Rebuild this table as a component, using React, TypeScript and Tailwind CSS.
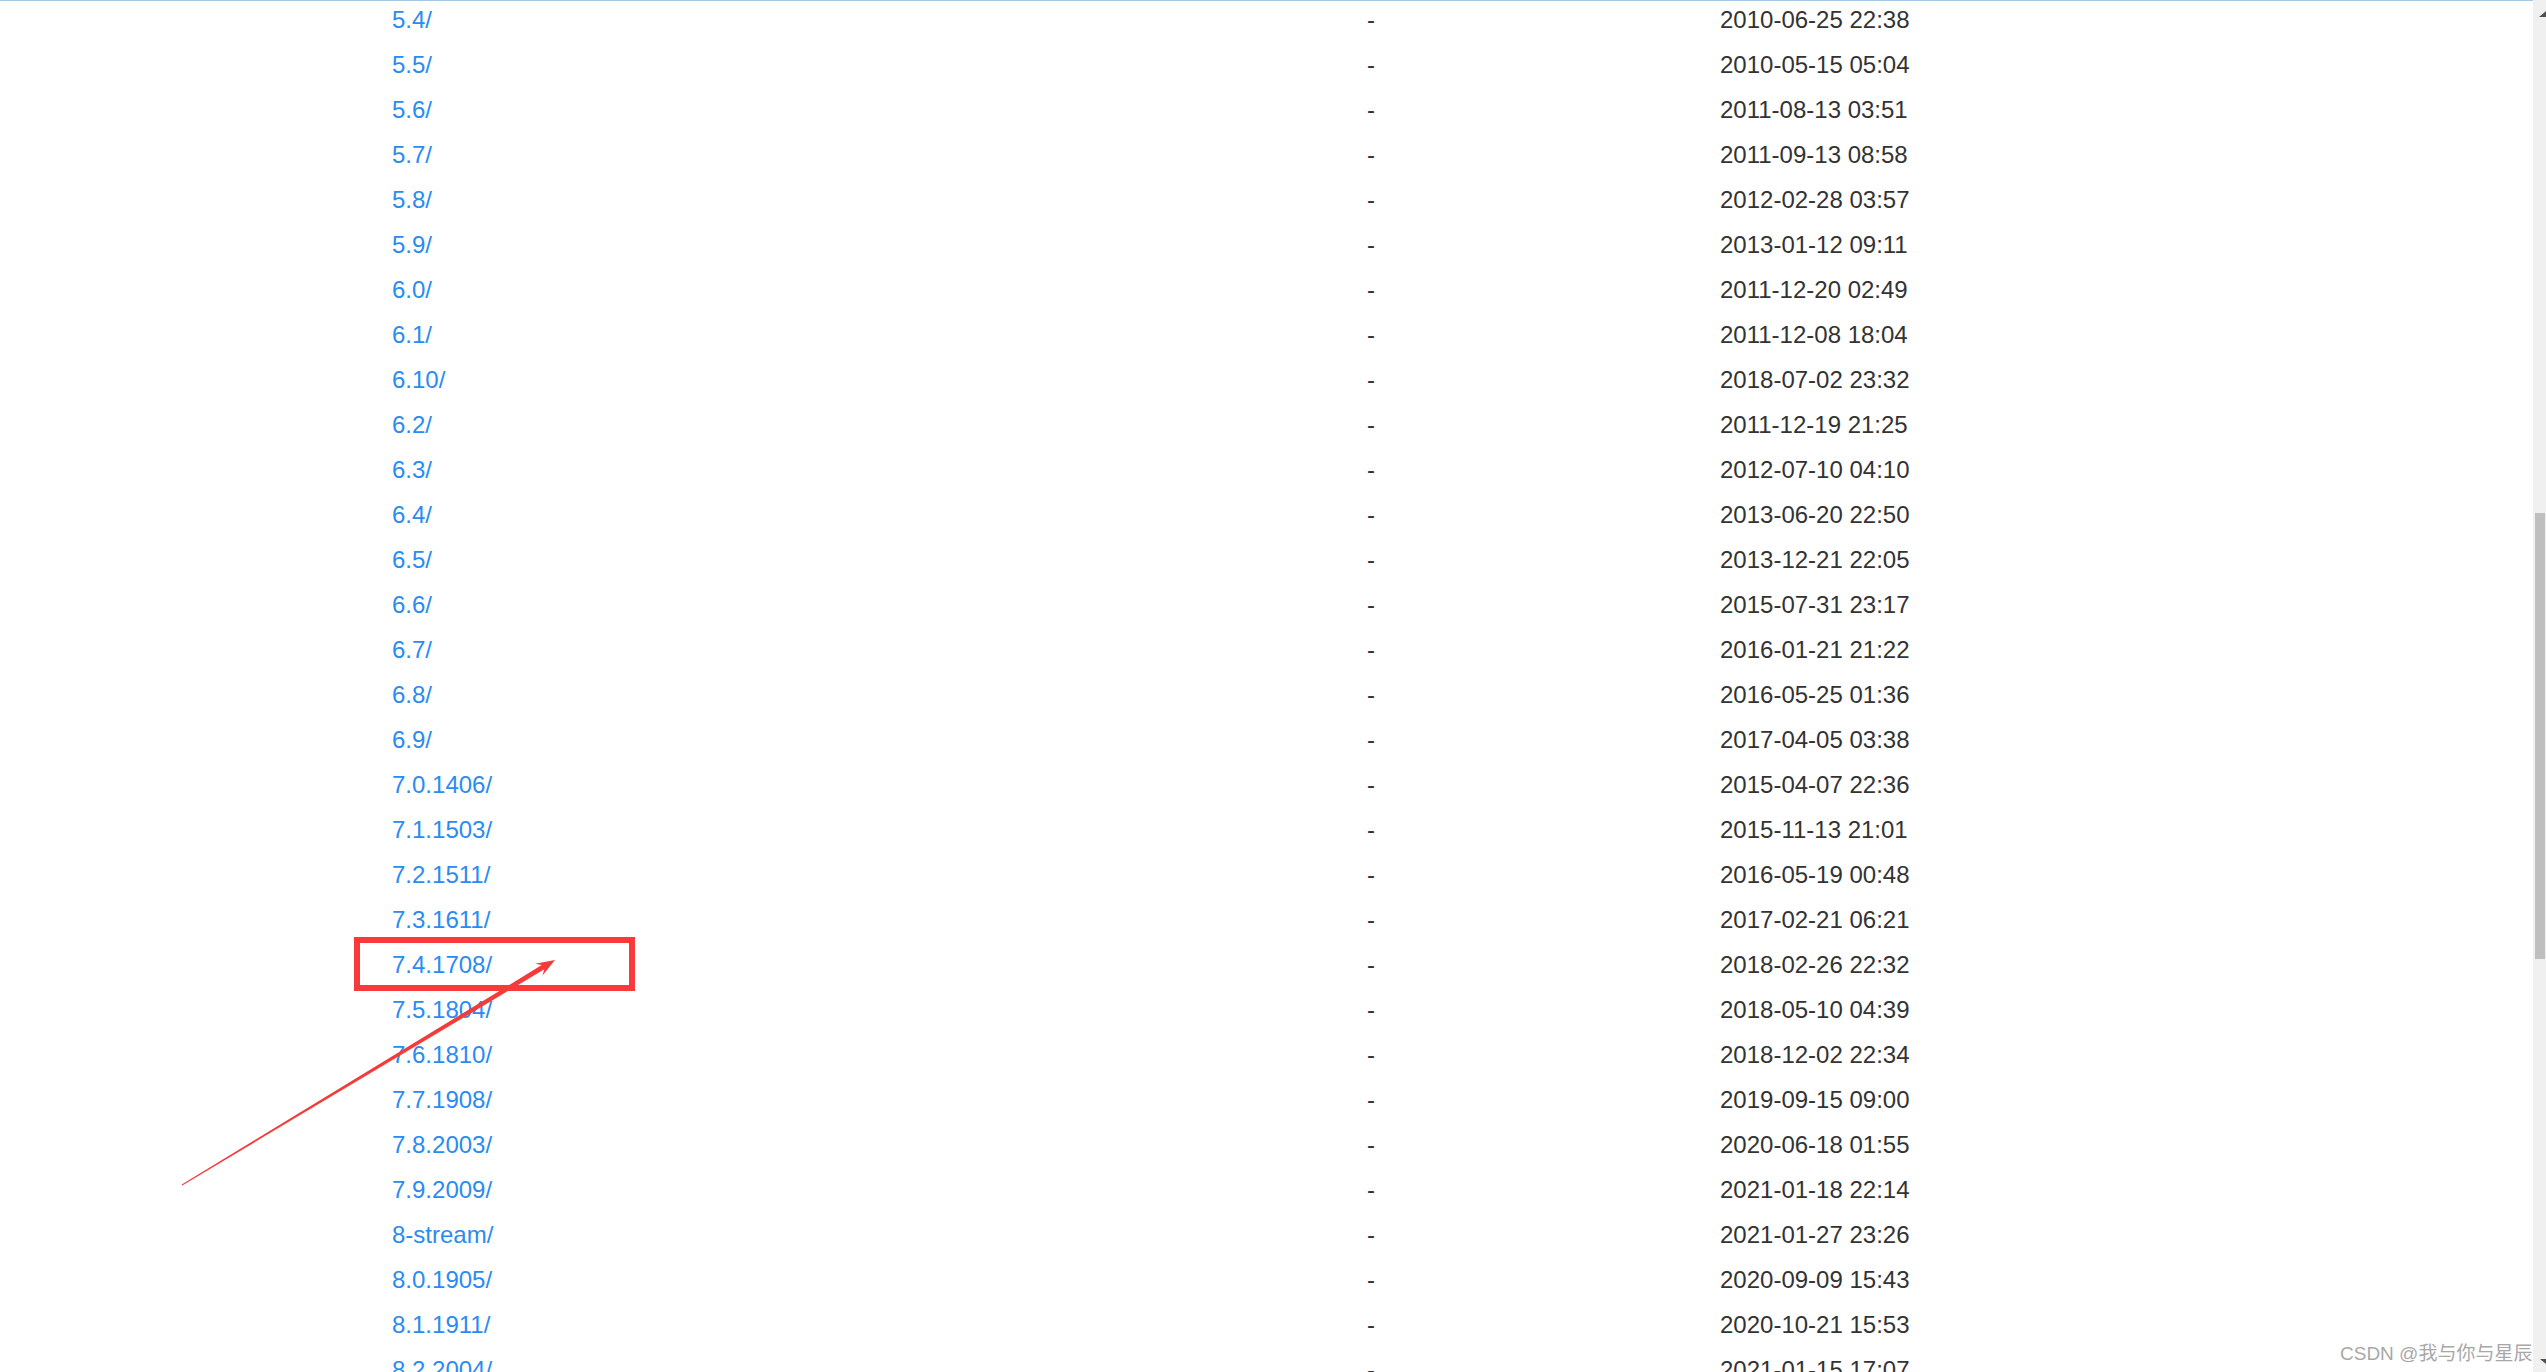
import React from "react";

const rows: [string, string][] = [
  ["5.4/", "2010-06-25 22:38"],
  ["5.5/", "2010-05-15 05:04"],
  ["5.6/", "2011-08-13 03:51"],
  ["5.7/", "2011-09-13 08:58"],
  ["5.8/", "2012-02-28 03:57"],
  ["5.9/", "2013-01-12 09:11"],
  ["6.0/", "2011-12-20 02:49"],
  ["6.1/", "2011-12-08 18:04"],
  ["6.10/", "2018-07-02 23:32"],
  ["6.2/", "2011-12-19 21:25"],
  ["6.3/", "2012-07-10 04:10"],
  ["6.4/", "2013-06-20 22:50"],
  ["6.5/", "2013-12-21 22:05"],
  ["6.6/", "2015-07-31 23:17"],
  ["6.7/", "2016-01-21 21:22"],
  ["6.8/", "2016-05-25 01:36"],
  ["6.9/", "2017-04-05 03:38"],
  ["7.0.1406/", "2015-04-07 22:36"],
  ["7.1.1503/", "2015-11-13 21:01"],
  ["7.2.1511/", "2016-05-19 00:48"],
  ["7.3.1611/", "2017-02-21 06:21"],
  ["7.4.1708/", "2018-02-26 22:32"],
  ["7.5.1804/", "2018-05-10 04:39"],
  ["7.6.1810/", "2018-12-02 22:34"],
  ["7.7.1908/", "2019-09-15 09:00"],
  ["7.8.2003/", "2020-06-18 01:55"],
  ["7.9.2009/", "2021-01-18 22:14"],
  ["8-stream/", "2021-01-27 23:26"],
  ["8.0.1905/", "2020-09-09 15:43"],
  ["8.1.1911/", "2020-10-21 15:53"],
  ["8.2.2004/", "2021-01-15 17:07"],
];

export default function App() {
  return (
    <div
      className="relative flex h-screen w-full overflow-hidden bg-white"
      style={{ fontFamily: '"Liberation Sans", Arial, "Noto Sans CJK SC", sans-serif' }}
    >
      <div className="flex min-w-0 flex-1 flex-col">
        <div className="h-px w-full shrink-0 bg-[#a6c8e6]" />
        <div className="mt-[-4px] flex flex-col pl-[392px] text-[24px]">
          {rows.map(([name, date]) => (
            <div
              key={name}
              className="grid h-[45px] grid-cols-[975px_353px_auto] leading-[45px]"
            >
              <a className="whitespace-nowrap text-[#2a8bf2]">{name}</a>
              <span className="text-[#333333]">-</span>
              <span className="whitespace-nowrap text-[#333333]">{date}</span>
            </div>
          ))}
        </div>
      </div>

      <div className="relative flex w-[13px] shrink-0 flex-col bg-[#f0f0f0]">
        <div className="ml-[2px] mt-[513px] h-[446px] w-[10px] bg-[#bfbfbf]" />
      </div>

      <svg
        className="pointer-events-none absolute left-0 top-0"
        width="2546"
        height="1372"
        viewBox="0 0 2546 1372"
      >
        <rect x="357" y="940" width="275" height="48" fill="none" stroke="#fa3a3a" strokeWidth="6" />
        <polygon
          points="181.74,1184.57 541.72,965.09 535.11,963.82 555,960 542.35,975.8 544.3,969.37 182.26,1185.43"
          fill="#f53a3a"
        />
        <polygon points="2539,17 2546,17 2546,11" fill="#505050" />
        <polygon points="2540,1359 2546,1359 2546,1364" fill="#505050" />
      </svg>

      <div className="pointer-events-none absolute left-[2340px] top-[1341px] whitespace-nowrap text-[19px] leading-[26px] text-[#a8a8a8]">
        CSDN @我与你与星辰
      </div>
    </div>
  );
}
